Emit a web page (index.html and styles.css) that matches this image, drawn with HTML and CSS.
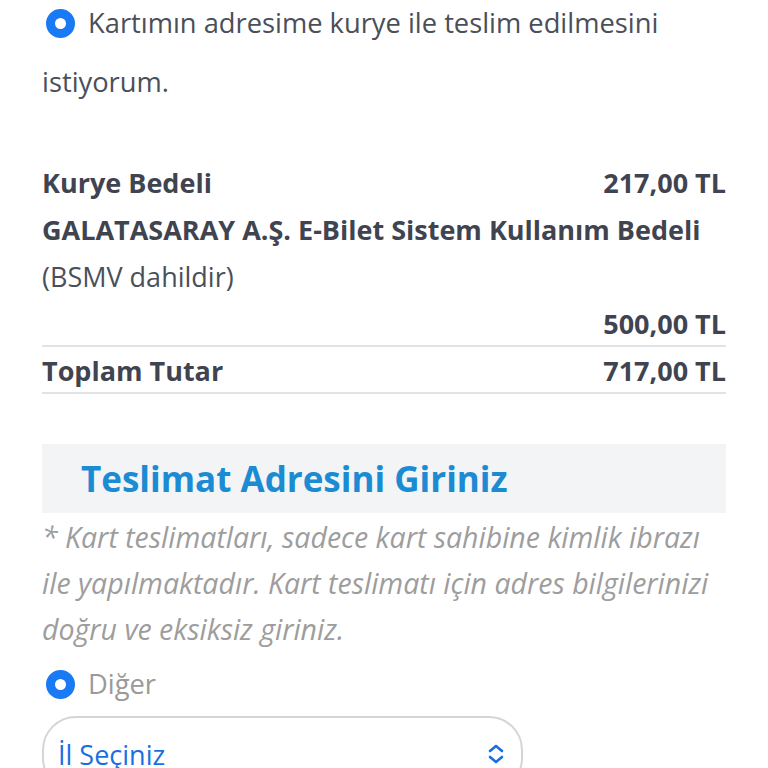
FILE: index.html
```html
<!DOCTYPE html>
<html lang="tr">
<head>
<meta charset="utf-8">
<link rel="stylesheet" href="styles.css">
</head>
<body>
<div class="page">
  <label class="choice choice-top">
    <span class="radio"></span>Kartımın adresime kurye ile teslim edilmesini istiyorum.
  </label>

  <div class="fees">
    <div class="row"><span>Kurye Bedeli</span><span>217,00 TL</span></div>
    <div class="row"><span>GALATASARAY A.Ş. E-Bilet Sistem Kullanım Bedeli</span></div>
    <div class="row note"><span>(BSMV dahildir)</span></div>
    <div class="row bordered"><span></span><span>500,00 TL</span></div>
    <div class="row bordered"><span>Toplam Tutar</span><span>717,00 TL</span></div>
  </div>

  <div class="section-head">
    <h2>Teslimat Adresini Giriniz</h2>
  </div>
  <p class="info">* Kart teslimatları, sadece kart sahibine kimlik ibrazı ile yapılmaktadır. Kart teslimatı için adres bilgilerinizi doğru ve eksiksiz giriniz.</p>

  <label class="choice choice-other">
    <span class="radio"></span>Diğer
  </label>

  <div class="select">
    <span>İl Seçiniz</span>
    <svg class="chev" width="18" height="22" viewBox="0 0 18 22"><path d="M3 8 L9 3 L15 8 M3 14 L9 19 L15 14" fill="none" stroke="#1a6fe0" stroke-width="2.6" stroke-linecap="round" stroke-linejoin="round"/></svg>
  </div>
</div>
</body>
</html>
```
FILE: styles.css
```css
html, body { margin: 0; padding: 0; background: #fff; }
body { font-family: "Open Sans", "Noto Sans", sans-serif; color: #3f4450; }
.page { padding: 0 42px; }
.choice { display: block; font-size: 27.3px; line-height: 59px; color: #4a4f59; }
.choice-top { margin-top: -7px; }
.radio {
  display: inline-block; width: 29px; height: 29px; border-radius: 50%;
  box-sizing: border-box; border: 9.5px solid #1a7af3; background: #fff;
  vertical-align: -5px; margin: 0 13px 0 4px;
}
.fees { margin-top: 48px; }
.row { display: flex; justify-content: space-between; font-size: 27px; font-weight: 700; line-height: 47px; height: 47px; }
.row.note { font-weight: 400; font-size: 27px; color: #4a4f59; }
.bordered { border-bottom: 2px solid #e2e3e6; box-sizing: border-box; }
.section-head { background: #f3f4f6; margin-top: 50px; height: 69px; display: flex; align-items: center; padding-left: 39px; }
.section-head h2 { margin: 0; font-size: 35px; font-weight: 700; color: #1b8bd3; }
.info { margin: 0; padding-top: 1px; font-size: 28.5px; font-style: italic; line-height: 46px; color: #9d9d9d; }
.choice-other { color: #9a9a9a; margin-top: 2px; }
.select {
  margin-top: 3px; width: 481px; height: 76px; box-sizing: border-box; border: 2px solid #d4d5d8; border-radius: 34px;
  display: flex; justify-content: space-between; align-items: center; padding: 0 16px 0 14px;
  font-size: 27px; color: #1a6fe0;
}
```
